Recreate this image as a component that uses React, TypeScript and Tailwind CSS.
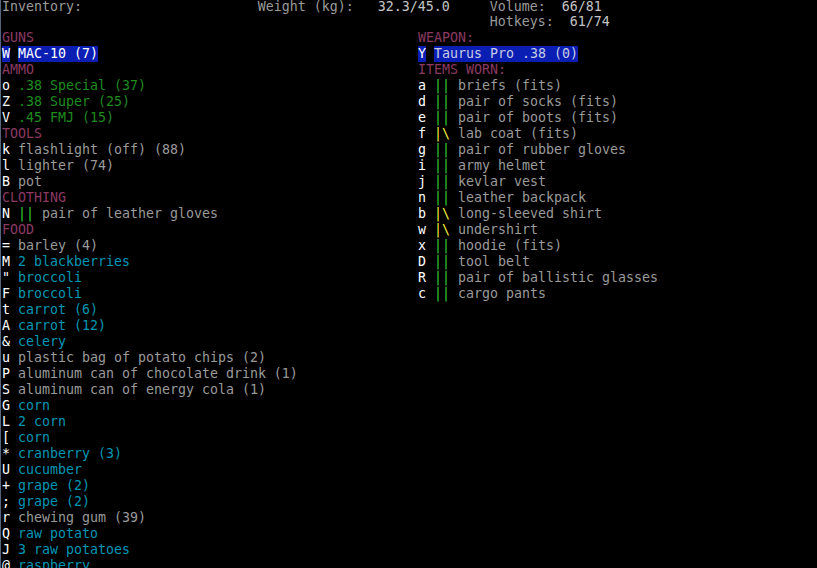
import React from "react";

type Seg = { t: string; c: string; bg?: boolean };

const GRAY = "text-[#9a9a9a]";
const VAL = "text-[#c4c4c4]";
const WHITE = "text-white";
const MAG = "text-[#8b3a62]";
const CYAN = "text-[#0096b4]";
const GREEN = "text-[#1f8c1f]";
const LGREEN = "text-[#2fcf2f]";
const YEL = "text-[#f2f23a]";

const item = (k: string, name: string, c: string): Seg[] => [
  { t: k, c: WHITE },
  { t: " ", c: GRAY },
  { t: name, c },
];
const worn = (k: string, mark: "ok" | "warn", name: string): Seg[] => [
  { t: k, c: WHITE },
  { t: " ", c: GRAY },
  { t: mark === "ok" ? "||" : "|\\", c: mark === "ok" ? LGREEN : YEL },
  { t: " ", c: GRAY },
  { t: name, c: GRAY },
];
const head = (t: string): Seg[] => [{ t, c: MAG }];

const left: Seg[][] = [
  head("GUNS"),
  [
    { t: "W", c: WHITE, bg: true },
    { t: " ", c: GRAY },
    { t: "MAC-10 (7)", c: WHITE, bg: true },
  ],
  head("AMMO"),
  item("o", ".38 Special (37)", GREEN),
  item("Z", ".38 Super (25)", GREEN),
  item("V", ".45 FMJ (15)", GREEN),
  head("TOOLS"),
  item("k", "flashlight (off) (88)", GRAY),
  item("l", "lighter (74)", GRAY),
  item("B", "pot", GRAY),
  head("CLOTHING"),
  worn("N", "ok", "pair of leather gloves"),
  head("FOOD"),
  item("=", "barley (4)", GRAY),
  item("M", "2 blackberries", CYAN),
  item('"', "broccoli", CYAN),
  item("F", "broccoli", CYAN),
  item("t", "carrot (6)", CYAN),
  item("A", "carrot (12)", CYAN),
  item("&", "celery", CYAN),
  item("u", "plastic bag of potato chips (2)", GRAY),
  item("P", "aluminum can of chocolate drink (1)", GRAY),
  item("S", "aluminum can of energy cola (1)", GRAY),
  item("G", "corn", CYAN),
  item("L", "2 corn", CYAN),
  item("[", "corn", CYAN),
  item("*", "cranberry (3)", CYAN),
  item("U", "cucumber", CYAN),
  item("+", "grape (2)", CYAN),
  item(";", "grape (2)", CYAN),
  item("r", "chewing gum (39)", GRAY),
  item("Q", "raw potato", CYAN),
  item("J", "3 raw potatoes", CYAN),
  item("@", "raspberry", CYAN),
];

const right: Seg[][] = [
  head("WEAPON:"),
  [
    { t: "Y", c: WHITE, bg: true },
    { t: " ", c: GRAY },
    { t: "Taurus Pro .38 (0)", c: "text-[#c6cce4]", bg: true },
  ],
  head("ITEMS WORN:"),
  worn("a", "ok", "briefs (fits)"),
  worn("d", "ok", "pair of socks (fits)"),
  worn("e", "ok", "pair of boots (fits)"),
  worn("f", "warn", "lab coat (fits)"),
  worn("g", "ok", "pair of rubber gloves"),
  worn("i", "ok", "army helmet"),
  worn("j", "ok", "kevlar vest"),
  worn("n", "ok", "leather backpack"),
  worn("b", "warn", "long-sleeved shirt"),
  worn("w", "warn", "undershirt"),
  worn("x", "ok", "hoodie (fits)"),
  worn("D", "ok", "tool belt"),
  worn("R", "ok", "pair of ballistic glasses"),
  worn("c", "ok", "cargo pants"),
];

function Line({ segs }: { segs?: Seg[] }) {
  return (
    <div className="h-[16px] whitespace-pre">
      {(segs ?? []).map((s, i) =>
        s.bg ? (
          <span key={i} className={`${s.c} bg-[#0a1eb4] inline-block h-[16px] align-top`}>
            {s.t}
          </span>
        ) : (
          <span key={i} className={s.c}>
            {s.t}
          </span>
        )
      )}
    </div>
  );
}

export default function App() {
  return (
    <div className="w-[817px] h-[568px] bg-black overflow-hidden border-l border-[#56657a] pl-[1px]">
      <div
        className="mt-[-1px] text-[13.29px] leading-[16px]"
        style={{ fontFamily: '"DejaVu Sans Mono", "Liberation Mono", monospace' }}
      >
        <div className="h-[15px] whitespace-pre">
          <span className={GRAY}>{"Inventory:                      Weight (kg):   "}</span>
          <span className={VAL}>{"32.3/45.0"}</span>
          <span className={GRAY}>{"     Volume:  "}</span>
          <span className={VAL}>{"66/81"}</span>
        </div>
        <div className="h-[16px] whitespace-pre">
          <span className={GRAY}>{"                                                             Hotkeys:  "}</span>
          <span className={VAL}>{"61/74"}</span>
        </div>
        <div className="flex">
          <div className="w-[416px] shrink-0">
            {left.map((r, i) => (
              <Line key={i} segs={r} />
            ))}
          </div>
          <div className="flex-1">
            {right.map((r, i) => (
              <Line key={i} segs={r} />
            ))}
          </div>
        </div>
      </div>
    </div>
  );
}
